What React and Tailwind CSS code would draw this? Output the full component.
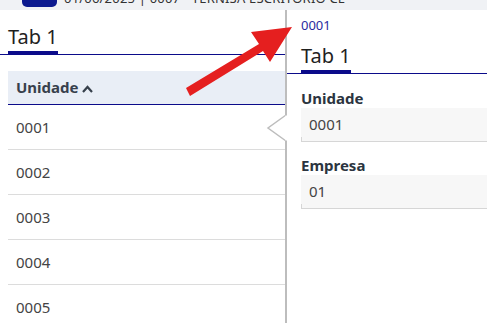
import React from "react";

const font = { fontFamily: '"Noto Sans", "Open Sans", sans-serif' };

function Field({ label, value }) {
  return (
    <div className="mb-[13px]">
      <div className="pl-[14px] text-[15px] leading-[20px] font-bold text-[#2b3440]">{label}</div>
      <div className="ml-[14px] relative h-[34px] bg-[#f7f7f7] border-b border-[#d6d6d6] flex items-center pl-[8px] text-[15px] text-[#444]">
        {value}
        <span className="absolute left-0 bottom-0 w-px h-[4px] bg-[#d6d6d6]" />
      </div>
    </div>
  );
}

export default function App() {
  const rows = ["0001", "0002", "0003", "0004", "0005", "0006"];
  return (
    <div className="relative w-[487px] h-[323px] overflow-hidden bg-white" style={font}>
      {/* top bar */}
      <div className="h-[10px] bg-[#f0f2f5] overflow-hidden">
        <div className="flex items-center mt-[-11px] pl-[22px] gap-[7px]">
          <div className="w-[35px] h-[18px] rounded-[5px] bg-[#0c1a8f]" />
          <div className="text-[13px] leading-[18px] text-[#333] whitespace-nowrap tracking-[0.2px]">
            01/06/2025 | 0007 - TERNISA ESCRITORIO CE
          </div>
        </div>
      </div>

      <div className="flex h-[313px]">
        {/* left panel */}
        <div className="w-[285px] shrink-0 flex flex-col">
          <div className="pt-[13px] pl-[8px] border-b border-[#0b0b8a] flex">
            <div className="border-b-4 border-[#0b0b8a] mb-[-1px] text-[20px] leading-[28px] text-[#1f1f1f]">Tab 1</div>
          </div>
          <div className="ml-[8px] mt-[16px]">
            <div className="h-[34px] bg-[#e9eef6] border-b border-[#0b0b8a] flex items-center pl-[8px] gap-[4px]">
              <span className="text-[15px] font-bold text-[#37404c]">Unidade</span>
              <svg width="11" height="8" viewBox="0 0 11 8" className="mt-[3px]">
                <path d="M1 7 L5.5 2 L10 7" fill="none" stroke="#37404c" strokeWidth="2.2" />
              </svg>
            </div>
            {rows.map((r) => (
              <div key={r} className="h-[45px] border-b border-[#dcdcdc] flex items-center pl-[8px] text-[15px] text-[#444]">
                {r}
              </div>
            ))}
          </div>
        </div>

        {/* divider */}
        <div className="w-[2px] shrink-0 bg-[#bdbdbd]" />

        {/* right panel */}
        <div className="flex-1 flex flex-col min-w-0">
          <div className="pl-[14px] pt-[6px] text-[13px] leading-[18px] text-[#2a2aa0]">0001</div>
          <div className="mt-[8px] pl-[14px] border-b border-[#0b0b8a] flex">
            <div className="border-b-4 border-[#0b0b8a] mb-[-1px] text-[20px] leading-[28px] text-[#1f1f1f]">Tab 1</div>
          </div>
          <div className="mt-[14px]">
            <Field label="Unidade" value="0001" />
            <Field label="Empresa" value="01" />
          </div>
        </div>
      </div>

      {/* popover arrow */}
      <svg className="absolute left-[266px] top-[114px]" width="22" height="30" viewBox="0 0 22 30">
        <path d="M20 1 L2 14 L20 27" fill="#ffffff" stroke="#bdbdbd" strokeWidth="1.5" />
        <rect x="19.5" y="1.5" width="3" height="25" fill="#ffffff" />
      </svg>

      {/* red arrow annotation */}
      <svg className="absolute left-0 top-0 pointer-events-none" width="487" height="323" viewBox="0 0 487 323">
        <polygon
          points="190,96 186,88 259,44 251,32 292,27 270,62 263,51"
          fill="#e51f1f"
        />
      </svg>
    </div>
  );
}
